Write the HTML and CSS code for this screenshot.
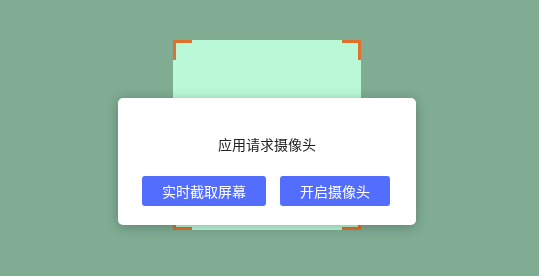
FILE: index.html
```html
<!DOCTYPE html>
<html lang="zh-CN">
<head>
    <meta charset="UTF-8">
    <meta name="viewport" content="width=device-width, initial-scale=1.0">
    <title>摄像头</title>
    <link rel="stylesheet" href="styles.css">
</head>
<body>
    <div id="stage">
        <div id="scanFrame">
            <span class="corner tl"></span>
            <span class="corner tr"></span>
            <span class="corner bl"></span>
            <span class="corner br"></span>
        </div>
    </div>
    <div id="dialog">
        <div id="dialogTitle">应用请求摄像头</div>
        <div id="buttonRow">
            <button>实时截取屏幕</button>
            <button>开启摄像头</button>
        </div>
    </div>
</body>
</html>
```

FILE: styles.css
```css
body {
    font-family: "Noto Sans CJK SC", "Liberation Sans", sans-serif;
    margin: 0;
    padding: 0;
    background-color: #7fac93;
    height: 276px;
    overflow: hidden;
}
#stage {
    padding-top: 40px;
    padding-left: 173px;
}
#scanFrame {
    position: relative;
    width: 188px;
    height: 190px;
    background-color: #b9f9d7;
}
.corner {
    position: absolute;
    width: 16px;
    height: 17px;
    border: 0 solid #e0702a;
}
.tl {
    top: 0;
    left: 0;
    border-top-width: 3px;
    border-left-width: 3px;
}
.tr {
    top: 0;
    right: 0;
    border-top-width: 3px;
    border-right-width: 3px;
}
.bl {
    bottom: 0;
    left: 0;
    border-bottom-width: 3px;
    border-left-width: 3px;
}
.br {
    bottom: 0;
    right: 0;
    border-bottom-width: 3px;
    border-right-width: 3px;
}
#dialog {
    position: fixed;
    left: 118px;
    top: 98px;
    width: 298px;
    box-sizing: border-box;
    padding: 36px 0 19px;
    background-color: #fff;
    border-radius: 5px;
    box-shadow: 0 2px 12px rgba(0, 0, 0, 0.25);
    text-align: center;
}
#dialogTitle {
    font-size: 14px;
    line-height: 20px;
    color: #222;
}
#buttonRow {
    margin-top: 22px;
    padding-right: 2px;
    display: flex;
    justify-content: center;
    gap: 14px;
}
button {
    font-family: inherit;
    font-size: 14px;
    line-height: 30px;
    height: 30px;
    padding: 0 20px;
    background-color: #536dfe;
    color: #fff;
    border: none;
    border-radius: 3px;
    cursor: pointer;
}
```
